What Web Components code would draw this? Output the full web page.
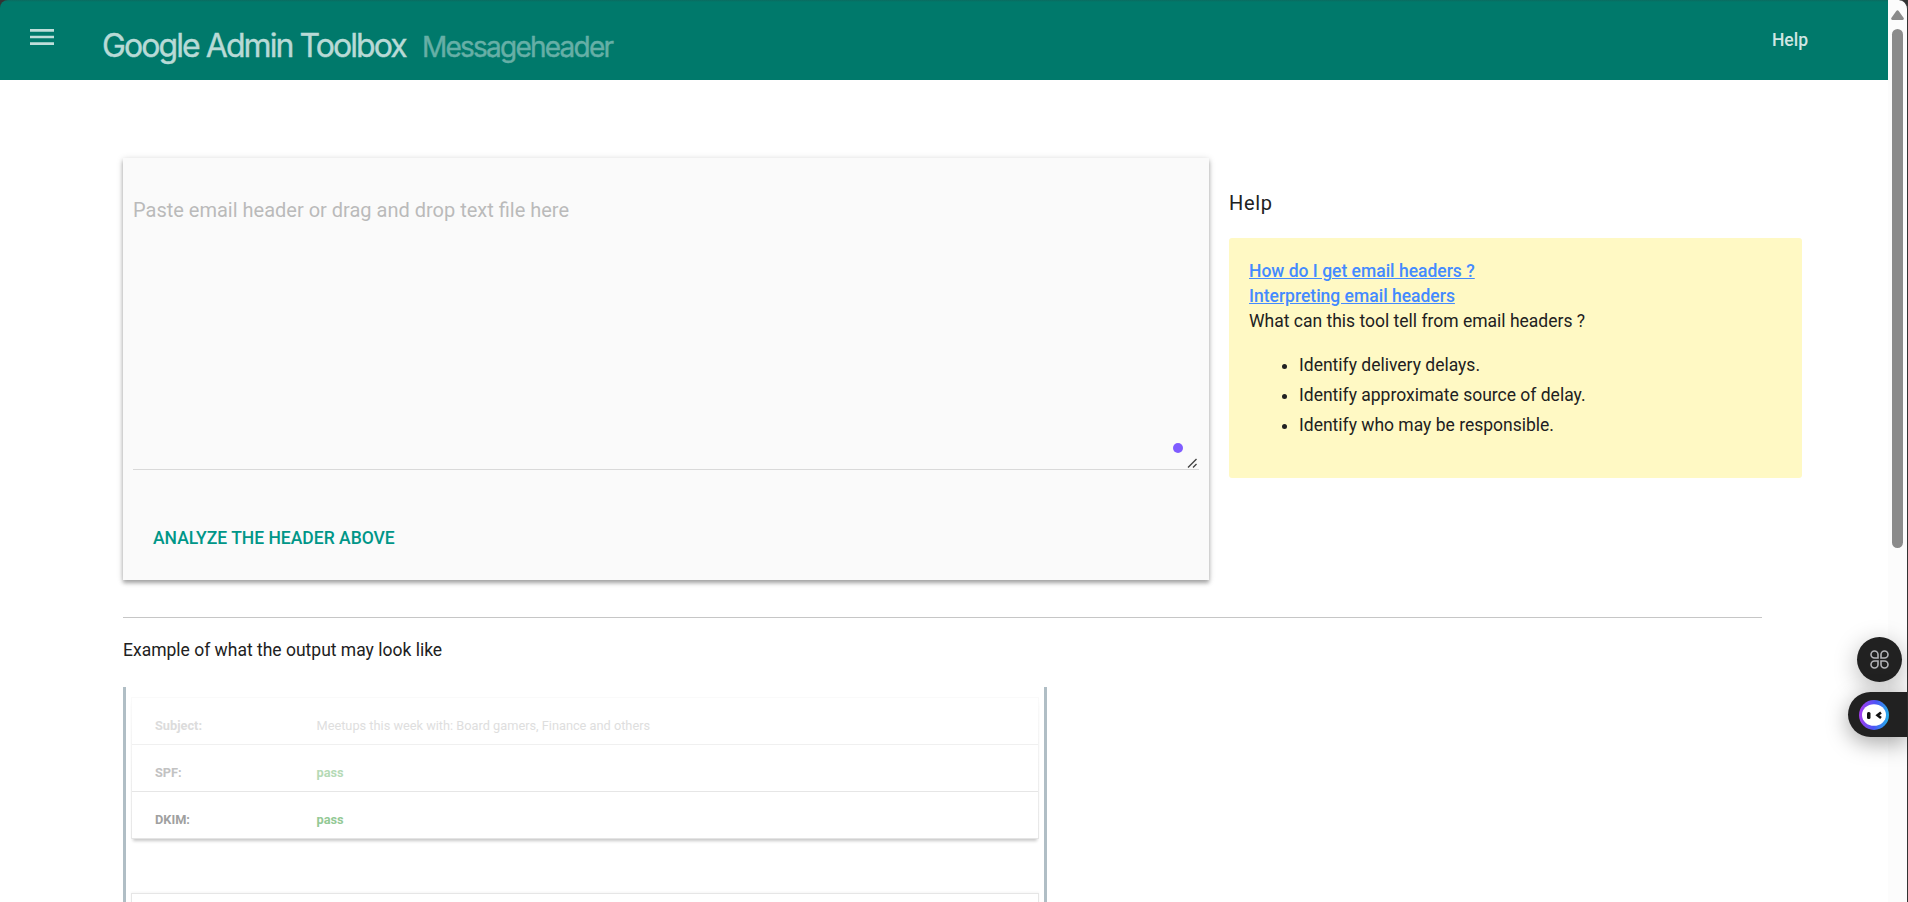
<!DOCTYPE html>
<html lang="en"><head><meta charset="utf-8"><title>Messageheader</title>
<style>
html,body{margin:0;height:100%;overflow:hidden;background:#fff;font-family:Roboto,"Liberation Sans",sans-serif}
</style></head><body>
<toolbox-app></toolbox-app>
<script>
const define=(name,html)=>customElements.define(name,class extends HTMLElement{
  constructor(){super();const t=document.createElement('template');t.innerHTML=html;
    this.attachShadow({mode:'open'}).append(t.content.cloneNode(true));}
});

define('app-header',`<style>
:host{display:flex;height:80px;background:#00796b;background-image:linear-gradient(#0b6b60,#00796b 2px);box-sizing:border-box;padding:0 80px 0 26px;justify-content:space-between}
.left{display:flex}
svg{width:32px;height:32px;margin-top:21px;fill:#bfdeda}
h1{margin:0 0 0 44px;font:400 32px/40px Inter,sans-serif;white-space:nowrap;display:flex;align-items:baseline;padding-top:26px;color:#b8dad6;-webkit-text-stroke:.4px currentColor}
.brand{width:306px;letter-spacing:-1.93px}
.tool{font-size:28px;letter-spacing:-1.77px;color:#66afa6;margin-left:14px}
a{font:500 17.5px/24px Roboto,sans-serif;margin-top:28px;color:#d0e6e3}
</style><div class="left"><svg viewBox="0 0 24 24"><path d="M3 18h18v-2H3v2zm0-5h18v-2H3v2zm0-7v2h18V6H3z"/></svg>
<h1><span class="brand">Google Admin Toolbox</span><span class="tool">Messageheader</span></h1></div><a>Help</a>`);

define('header-form',`<style>
:host{display:flex;flex-direction:column;width:1086px;height:422px;box-sizing:border-box;padding:35px 10px 0;background:#fafafa;box-shadow:0 3px 4px rgba(0,0,0,.3),0 1px 7px rgba(0,0,0,.14)}
.field{position:relative;height:276px;border-bottom:1px solid #d9d9d9;font-size:20px;line-height:34px;color:#bababa}
.dot{position:absolute;right:16px;bottom:16px;width:10px;height:10px;border-radius:50%;background:#7f5cff}
.grip{position:absolute;right:1px;bottom:1px;width:11px;height:10px;stroke:#444;stroke-width:1.4}
.btn{margin:56px 0 0 20px;font-weight:500;font-size:17.5px;line-height:24px;color:#009688}
</style><div class="field"><span>Paste email header or drag and drop text file here</span><i class="dot"></i>
<svg class="grip" viewBox="0 0 11 10"><path d="M1 9.5 9.5 1M6 9.5 9.5 6"/></svg></div><div class="btn"><span>ANALYZE THE HEADER ABOVE</span></div>`);

define('help-panel',`<style>
:host{display:block;width:573px;color:#212121;font-size:17.5px;line-height:25px}
h2{margin:33px 0 0;font-weight:400;font-size:20px;line-height:24px;letter-spacing:.7px;height:47px}
.box{height:240px;box-sizing:border-box;background:#fff9c4;border-radius:3px;padding:21px 20px 19px;display:flex;flex-direction:column;align-items:flex-start}
a{font-weight:500;color:#448aff;text-decoration:underline}
ul{margin:16px 0 0;padding-left:50px;line-height:30px}
</style><h2><span>Help</span></h2><div class="box"><a>How do I get email headers ?</a><a>Interpreting email headers</a><span>What can this tool tell from email headers ?</span>
<ul><li><span>Identify delivery delays.</span></li><li><span>Identify approximate source of delay.</span></li><li><span>Identify who may be responsible.</span></li></ul></div>`);

define('example-row',`<style>
:host{display:flex;height:47px;box-sizing:border-box;border-bottom:1px solid var(--line);padding:19px 0 0 23px;font-size:12.77px;line-height:18px}
b{width:161.5px;color:var(--label);font-weight:700}
span{color:var(--value)}
</style><b><slot name="label"></slot></b><span><slot></slot></span>`);

define('example-output',`<style>
:host{display:block;width:924px;height:215px;box-sizing:border-box;border:solid #b0bec5;border-width:0 3px;padding:10px 5px 0 5px;overflow:hidden}
.card{height:142px;box-sizing:border-box;border:1px solid;border-bottom:0;border-image:linear-gradient(#fafafa,#e6e6e6) 1;box-shadow:0 4px 3px -2px rgba(0,0,0,.22)}
.next{height:40px;margin-top:54px;border:1px solid #e6e6e6;box-shadow:0 -1px 2px rgba(0,0,0,.04)}
example-row span{color:var(--label)}
</style><div class="card">
<example-row style="--line:#f0f0f0;--label:#dcdcdc;--value:#dedede"><span slot="label">Subject:</span>Meetups this week with: Board gamers, Finance and others</example-row>
<example-row style="--line:#e6e6e6;--label:#c2c2c2;--value:#b5dab6"><span slot="label">SPF:</span><strong>pass</strong></example-row>
<example-row style="--line:#e4e4e4;--label:#a0a0a0;--value:#93c995"><span slot="label">DKIM:</span><strong>pass</strong></example-row>
</div><div class="next"></div>`);

define('page-scrollbar',`<style>
:host{display:flex;flex-direction:column;align-items:center;width:20px;height:902px;background:#fcfcfc;box-sizing:border-box;border-right:1px solid #333;border-top-right-radius:9px}
svg{width:13px;height:10px;fill:#8b8b8b;margin-top:10px}
i{width:11px;height:519px;margin-top:9px;border-radius:6px;background:#8b8b8b}
</style><svg viewBox="0 0 13 10"><path d="M5.3 1q1.2-1.6 2.4 0l5 7q.6 1.7-1 2H1.300Q-.3 9.700.3 8z"/></svg><i></i>`);

define('floating-tools',`<style>
:host{position:absolute;right:1px;top:637px;width:59px;display:flex;flex-direction:column;gap:10px}
.c{width:45px;height:45px;margin-left:9px;border-radius:50%;background:#212121;display:grid;place-items:center;box-shadow:0 6px 24px rgba(0,0,0,.28)}
.p{height:45px;border-radius:23px 0 0 23px;background:#212121;box-shadow:0 6px 22px rgba(0,0,0,.35);display:flex;align-items:center;padding-left:11px}
svg{display:block}
</style><div class="c"><svg width="19" height="19" viewBox="0 0 19 19" fill="none" stroke="#b4b4b8" stroke-width="1.6"><path d="M8 8H4.500A3.500 3.500 0 1 1 8 4.500zM11 8h3.500A3.500 3.500 0 1 0 11 4.500zM8 11H4.500A3.500 3.500 0 1 0 8 14.500zM11 11h3.500A3.500 3.500 0 1 1 11 14.500z"/></svg></div>
<div class="p"><svg width="30" height="30" viewBox="0 0 30 30"><defs><linearGradient id="g" x1="0" y1=".7" x2="1" y2=".8"><stop stop-color="#a33df0"/><stop offset=".5" stop-color="#4b55f5"/><stop offset="1" stop-color="#22b4ea"/></linearGradient></defs><circle cx="15" cy="15" r="15" fill="url(#g)"/><ellipse cx="15" cy="15" rx="12" ry="10.800" fill="#fff"/><rect x="8" y="12" width="3.500" height="7" rx="1.500" fill="#111"/><path d="M22 12.500 18.500 15.300 22 18" fill="none" stroke="#111" stroke-width="2.600"/></svg></div>`);

define('toolbox-app',`<style>
:host{display:flex;width:1908px;height:902px;overflow:hidden;position:relative;background:#fff}
main{width:1888px;display:flex;flex-direction:column}
app-header{border-top-left-radius:8px}
.corner{background:#333;height:80px}
.edge{background:#333}
.body{padding:78px 0 0 123px}
.row{display:flex;gap:20px}
hr{border:0;height:1px;width:1639px;background:#c6c6c6;margin:37px 0 0}
p{margin:20px 0 24px;font-size:17.5px;line-height:25px;color:#212121}
</style><main><div class="corner"><app-header></app-header></div><div class="body"><div class="row"><header-form></header-form><help-panel></help-panel></div><hr><p><span>Example of what the output may look like</span></p><example-output></example-output></div></main><div class="edge"><page-scrollbar></page-scrollbar></div><floating-tools></floating-tools>`);
</script></body></html>
